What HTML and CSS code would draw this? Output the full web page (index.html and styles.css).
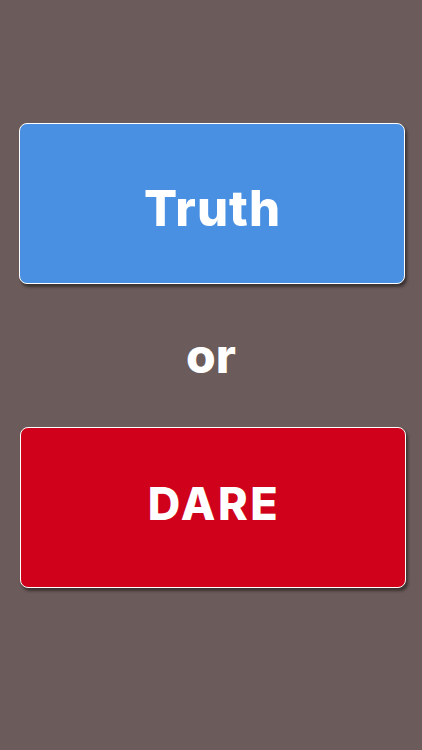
FILE: index.html
```html
<!DOCTYPE html>
<html>
<head>
<meta charset="utf-8">
<link rel="stylesheet" href="styles.css">
</head>
<body>
<main class="screen">
  <button class="choice truth">Truth</button>
  <div class="or">or</div>
  <button class="choice dare">DARE</button>
</main>
</body>
</html>
```
FILE: styles.css
```css
html, body {
  margin: 0;
  padding: 0;
  background: #6b5b5a;
}
.screen {
  width: 422px;
  height: 750px;
  display: flex;
  flex-direction: column;
  align-items: flex-start;
  padding-top: 123px;
  box-sizing: border-box;
  font-family: Inter, "Liberation Sans", Arial, sans-serif;
}
.choice {
  width: 386px;
  height: 161px;
  box-sizing: border-box;
  border: 1.5px solid #ffffff;
  border-radius: 8px;
  box-shadow: 2px 3px 3px rgba(0,0,0,0.45);
  color: #ffffff;
  font-family: Inter, "Liberation Sans", Arial, sans-serif;
  font-weight: 800;
  line-height: 1;
  display: flex;
  align-items: center;
  justify-content: center;
}
.truth {
  background: #4a90e2;
  margin-left: 19px;
  font-size: 49px;
  letter-spacing: 1px;
  padding: 10px 0 0 1px;
}
.dare {
  background: #d0021b;
  margin-left: 20px;
  font-size: 45px;
  letter-spacing: 2.5px;
  padding: 0 0 8px 2px;
}
.or {
  width: 422px;
  color: #ffffff;
  font-weight: 800;
  font-size: 48px;
  line-height: 1;
  height: 143px;
  display: flex;
  align-items: center;
  justify-content: center;
  box-sizing: border-box;
}
```
